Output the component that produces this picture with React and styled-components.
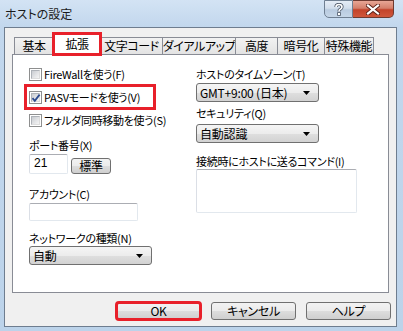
import React from "react";
import styled, { createGlobalStyle, css } from "styled-components";

const Global = createGlobalStyle`
  html, body { margin: 0; padding: 0; background: #bcd3ea; }
  body {
    font-family: "Noto Sans CJK JP", "Noto Sans", sans-serif;
    font-size: 11px;
    font-feature-settings: "palt";
    color: #000;
  }
`;

const Window = styled.div`
  width: 403px;
  height: 331px;
  box-sizing: border-box;
  display: flex;
  flex-direction: column;
  padding: 0 6px 4px 4px;
  background: linear-gradient(#d3e3f4 0px, #c2d7ed 27px, #bcd3ea 100%);
`;

const TitleBar = styled.div`
  height: 27px;
  display: flex;
  align-items: flex-start;
  justify-content: space-between;
  flex-shrink: 0;
`;

const Title = styled.div`
  padding: 6px 0 0 1px;
  font-size: 12px;
  line-height: 16px;
  color: #1a1a1a;
`;

const Caption = styled.div`
  display: flex;
  margin-right: 3px;
`;

const CapBtn = styled.div`
  height: 18px;
  box-sizing: border-box;
  display: flex;
  align-items: center;
  justify-content: center;
  ${(p) =>
    p.$kind === "close"
      ? css`
          width: 41px;
          border: 1px solid #6e3a30;
          border-left: none;
          border-radius: 0 0 5px 0;
          background: linear-gradient(#e8a695 0%, #d47f6b 45%, #c3432a 55%, #d0573b 100%);
        `
      : css`
          width: 29px;
          border: 1px solid #6f7f92;
          border-radius: 0 0 0 5px;
          background: linear-gradient(#e4ecf6 0%, #d2deec 45%, #b9cbe0 55%, #c6d6e8 100%);
        `}
`;

const Client = styled.div`
  flex: 1;
  display: flex;
  flex-direction: column;
  background: #f0f0f0;
  border: 1px solid #6e7d8f;
  padding: 5px 7px 0 7px;
`;

const TabStrip = styled.div`
  display: flex;
  align-items: flex-end;
  height: 21px;
  margin-left: 2px;
  position: relative;
  z-index: 1;
`;

const Tab = styled.div`
  box-sizing: border-box;
  flex-shrink: 0;
  width: ${(p) => p.$w}px;
  height: 17px;
  border: 1px solid #898c95;
  border-bottom: none;
  margin-right: -1px;
  background: linear-gradient(#f2f2f2, #e3e3e3);
  display: flex;
  align-items: center;
  justify-content: center;
  white-space: nowrap;
  line-height: 16px;
  font-size: 12px;
  letter-spacing: -0.4px;
  ${(p) =>
    p.$selected &&
    css`
      height: 22px;
      margin-bottom: -1px;
      background: #fff;
      padding-bottom: 2px;
      position: relative;
      z-index: 2;
      outline: 3px solid #e8202a;
      outline-offset: -2px;
    `}
`;

const Panel = styled.div`
  height: 239px;
  box-sizing: border-box;
  border: 1px solid #898c95;
  background: #fff;
  display: grid;
  grid-template-columns: 167px 1fr;
  padding: 11px 0 0 16px;
`;

const Column = styled.div`
  display: flex;
  flex-direction: column;
  align-items: flex-start;
`;

const Row = styled.div`
  display: flex;
  align-items: ${(p) => p.$align ?? "center"};
  gap: ${(p) => p.$gap ?? 2}px;
  height: ${(p) => p.$h ?? 16}px;
  margin-top: ${(p) => p.$mt ?? 0}px;
  white-space: nowrap;
  ${(p) => p.$w && css`width: ${p.$w}px;`}
  ${(p) =>
    p.$highlight &&
    css`
      outline: 3px solid #e8202a;
      outline-offset: 2px;
    `}
`;

const Label = styled.div`
  height: 16px;
  line-height: 16px;
  margin-top: ${(p) => p.$mt ?? 0}px;
  white-space: nowrap;
  letter-spacing: -0.3px;
`;

const Text = styled.span`
  letter-spacing: -0.3px;
  line-height: 16px;
`;

const Box = styled.div`
  width: 13px;
  height: 13px;
  box-sizing: border-box;
  border: 1px solid #8e8f8f;
  background: #fff;
  padding: 1px;
  display: flex;
  position: relative;
  &::before {
    content: "";
    flex: 1;
    background: linear-gradient(135deg, #c9ccd1 0%, #e4e5e7 60%, #f4f4f4 100%);
    border: 1px solid #b0b3b8;
    border-color: #aeb2b8 #dcdcdc #dcdcdc #aeb2b8;
  }
`;

const CheckSvg = styled.svg`
  position: absolute;
  left: 1px;
  top: 1px;
`;

const Checkbox = ({ checked }) => (
  <Box>
    {checked && (
      <CheckSvg width="10" height="10" viewBox="0 0 10 10">
        <path d="M1.5 5.2 L3.8 7.8 L8.6 1.6" fill="none" stroke="#2b4a8f" strokeWidth="1.8" />
      </CheckSvg>
    )}
  </Box>
);

const Input = styled.div`
  box-sizing: border-box;
  width: ${(p) => p.$w}px;
  height: ${(p) => p.$h ?? 19}px;
  margin-top: ${(p) => p.$mt ?? 0}px;
  border: 1px solid #e2e8ee;
  border-top-color: #abadb3;
  border-left-color: #dbdfe6;
  border-radius: 2px;
  background: #fff;
  padding: 0 4px;
  line-height: 17px;
  font-family: "Liberation Sans", sans-serif;
  font-size: 12px;
`;

const SelectBox = styled.div`
  box-sizing: border-box;
  width: 123px;
  height: 19px;
  margin-top: ${(p) => p.$mt ?? 0}px;
  border: 1px solid #707070;
  border-radius: 3px;
  background: linear-gradient(#f5f5f5 0%, #ececec 50%, #dfdfdf 51%, #d2d2d2 100%);
  display: flex;
  align-items: center;
  justify-content: space-between;
  padding: 0 8px 0 3px;
  line-height: 17px;
  white-space: nowrap;
  letter-spacing: -0.2px;
  font-size: 12px;
`;

const Select = ({ value, mt }) => (
  <SelectBox $mt={mt}>
    <span>{value}</span>
    <svg width="7" height="4" viewBox="0 0 7 4">
      <path d="M0 0 H7 L3.5 4 Z" fill="#000" />
    </svg>
  </SelectBox>
);

const Button = styled.div`
  box-sizing: border-box;
  width: ${(p) => p.$w}px;
  height: ${(p) => p.$h}px;
  border: 1px solid #707070;
  border-radius: 3px;
  background: linear-gradient(#f2f2f2 0%, #ebebeb 50%, #dddddd 51%, #cfcfcf 100%);
  display: flex;
  align-items: center;
  justify-content: center;
  line-height: 14px;
  font-size: 12px;
  letter-spacing: -0.3px;
  ${(p) =>
    p.$highlight &&
    css`
      outline: 3px solid #e8202a;
      outline-offset: -2px;
    `}
`;

const Footer = styled.div`
  display: flex;
  justify-content: flex-end;
  gap: 10px;
  margin: 9px -2px 0 0;
`;

const tabs = [
  { t: "基本", w: 40 },
  { t: "拡張", w: 48, sel: true },
  { t: "文字コード", w: 63 },
  { t: "ダイアルアップ", w: 74 },
  { t: "高度", w: 43 },
  { t: "暗号化", w: 48 },
  { t: "特殊機能", w: 50 },
];

export default function App() {
  return (
    <>
      <Global />
      <Window>
        <TitleBar>
          <Title>ホストの設定</Title>
          <Caption>
            <CapBtn $kind="help">
              <svg width="10" height="13" viewBox="0 0 10 13">
                <path
                  d="M2 4 Q2 1.5 5 1.5 Q8 1.5 8 4 Q8 5.5 6 6.5 Q5 7 5 8.5"
                  fill="none"
                  stroke="#4a5566"
                  strokeWidth="3.2"
                />
                <path
                  d="M2 4 Q2 1.5 5 1.5 Q8 1.5 8 4 Q8 5.5 6 6.5 Q5 7 5 8.5"
                  fill="none"
                  stroke="#fff"
                  strokeWidth="1.6"
                />
                <rect x="3.6" y="9.6" width="2.8" height="2.8" fill="#fff" stroke="#4a5566" strokeWidth="0.8" />
              </svg>
            </CapBtn>
            <CapBtn $kind="close">
              <svg width="14" height="11" viewBox="0 0 14 11">
                <path d="M2 1.5 L12 9.5 M12 1.5 L2 9.5" stroke="#5a1f16" strokeWidth="4" strokeLinecap="square" />
                <path d="M2 1.5 L12 9.5 M12 1.5 L2 9.5" stroke="#fff" strokeWidth="2.2" strokeLinecap="square" />
              </svg>
            </CapBtn>
          </Caption>
        </TitleBar>
        <Client>
          <TabStrip>
            {tabs.map((x) => (
              <Tab key={x.t} $w={x.w} $selected={x.sel}>
                {x.t}
              </Tab>
            ))}
          </TabStrip>
          <Panel>
            <Column>
              <Row>
                <Checkbox />
                <Text>FireWallを使う(F)</Text>
              </Row>
              <Row $mt={7} $highlight $w={122}>
                <Checkbox checked />
                <Text>PASVモードを使う(V)</Text>
              </Row>
              <Row $mt={7}>
                <Checkbox />
                <Text>フォルダ同時移動を使う(S)</Text>
              </Row>
              <Label $mt={9}>ポート番号(X)</Label>
              <Row $gap={3} $mt={1} $h={20} $align="flex-end">
                <Input $w={39} $h={20}>21</Input>
                <Button $w={40} $h={16}>標準</Button>
              </Row>
              <Label $mt={12}>アカウント(C)</Label>
              <Input $w={109} $h={18} $mt={1} />
              <Label $mt={9}>ネットワークの種類(N)</Label>
              <Select value="自動" />
            </Column>
            <Column>
              <Label>ホストのタイムゾーン(T)</Label>
              <Select value="GMT+9:00 (日本)" mt={1} />
              <Label $mt={3}>セキュリティ(Q)</Label>
              <Select value="自動認識" mt={3} />
              <Label $mt={10}>接続時にホストに送るコマンド(I)</Label>
              <Input $w={161} $h={44} />
            </Column>
          </Panel>
          <Footer>
            <Button $w={85} $h={18} $highlight>OK</Button>
            <Button $w={85} $h={18}>キャンセル</Button>
            <Button $w={85} $h={18}>ヘルプ</Button>
          </Footer>
        </Client>
      </Window>
    </>
  );
}
